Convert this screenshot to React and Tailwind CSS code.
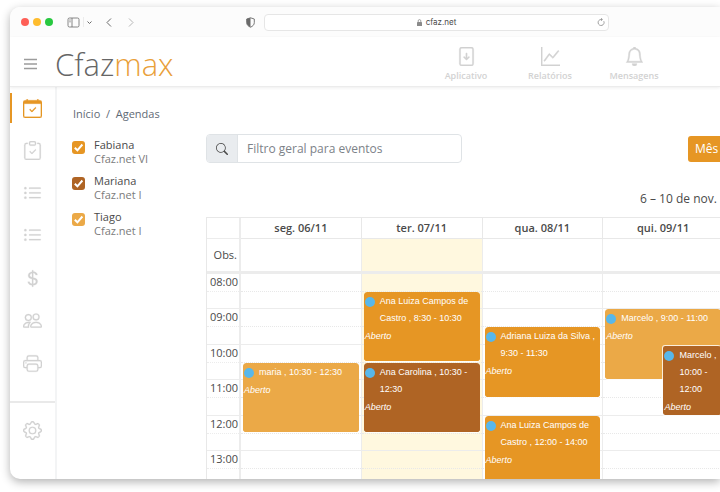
import React from "react";
import {
  BsBell,
  BsCalendarCheck,
  BsClipboardCheck,
  BsCurrencyDollar,
  BsFileArrowDown,
  BsGear,
  BsGraphUp,
  BsListUl,
  BsPeople,
  BsPrinter,
  BsSearch,
} from "react-icons/bs";

const FIRST_HOUR = 8;
const HOURS_SHOWN = 10;

const sideLinks = [
  { label: "Agendas", Icon: BsCalendarCheck, active: true },
  { label: "Tarefas", Icon: BsClipboardCheck },
  { label: "Cadastros", Icon: BsListUl },
  { label: "Listagens", Icon: BsListUl },
  { label: "Financeiro", Icon: BsCurrencyDollar },
  { label: "Pessoas", Icon: BsPeople },
  { label: "Imprimir", Icon: BsPrinter },
];

const topLinks = [
  { label: "Aplicativo", Icon: BsFileArrowDown },
  { label: "Relatórios", Icon: BsGraphUp },
  { label: "Mensagens", Icon: BsBell },
];

const people = [
  { id: "fabiana", name: "Fabiana", place: "Cfaz.net VI", color: "bg-[#e69624]" },
  { id: "mariana", name: "Mariana", place: "Cfaz.net I", color: "bg-[#af6424]" },
  { id: "tiago", name: "Tiago", place: "Cfaz.net I", color: "bg-[#eba947]" },
];

const days = [
  {
    label: "seg. 06/11",
    events: [{ title: "maria , 10:30 - 12:30", from: 10.5, to: 12.5, color: "bg-[#eba947]" }],
  },
  {
    label: "ter. 07/11",
    today: true,
    events: [
      { title: "Ana Luiza Campos de Castro , 8:30 - 10:30", from: 8.5, to: 10.5, color: "bg-[#e69624]" },
      { title: "Ana Carolina , 10:30 - 12:30", from: 10.5, to: 12.5, color: "bg-[#af6424]" },
    ],
  },
  {
    label: "qua. 08/11",
    events: [
      { title: "Adriana Luiza da Silva , 9:30 - 11:30", from: 9.5, to: 11.5, color: "bg-[#e69624]" },
      { title: "Ana Luiza Campos de Castro , 12:00 - 14:00", from: 12, to: 14, color: "bg-[#e69624]" },
    ],
  },
  {
    label: "qui. 09/11",
    events: [
      { title: "Marcelo , 9:00 - 11:00", from: 9, to: 11, color: "bg-[#eba947]" },
      { title: "Marcelo , 10:00 - 12:00", from: 10, to: 12, color: "bg-[#af6424]", half: true },
    ],
  },
];

const hours = [
  { label: "08:00", height: "h-[35px]" },
  { label: "09:00", height: "h-[36px]" },
  { label: "10:00", height: "h-[35px]" },
  { label: "11:00", height: "h-[36px]" },
  { label: "12:00", height: "h-[35px]" },
  { label: "13:00", height: "h-[36px]" },
];

function BrowserBar() {
  return (
    <div className="flex h-[30px] shrink-0 items-center bg-[#fcfcfc] pl-[11px] text-[#6a6a6a]">
      <div className="flex gap-1">
        <span className="size-2 rounded-full bg-[#fe5f57]" />
        <span className="size-2 rounded-full bg-[#febc2e]" />
        <span className="size-2 rounded-full bg-[#28c840]" />
      </div>
      <button type="button" aria-label="Barra lateral" className="ml-[14px]">
        <svg className="h-[11px] w-[13px]" viewBox="0 0 13 11" fill="none" stroke="currentColor">
          <rect x="1" y="1" width="11" height="9" rx="1.5" strokeWidth="0.8" />
          <path d="M5 1v9M2.3 3h1.4M2.3 4.8h1.4" strokeWidth="0.8" />
        </svg>
      </button>
      <span className="ml-[3px] h-[10px] w-px bg-[#ececec]" />
      <button type="button" aria-label="Grupos de abas" className="ml-[3px]">
        <svg className="size-[5px]" viewBox="0 0 5 5" fill="none" stroke="currentColor">
          <path d="M.5 1.5l2 2 2-2" />
        </svg>
      </button>
      <button type="button" aria-label="Voltar" className="ml-[14px]">
        <svg className="h-[9px] w-[6px]" viewBox="0 0 6 9" fill="none" stroke="currentColor">
          <path d="M5 .5l-4 4 4 4" />
        </svg>
      </button>
      <button type="button" aria-label="Avançar" className="ml-4 text-[#b5b5b5]">
        <svg className="h-[9px] w-[6px]" viewBox="0 0 6 9" fill="none" stroke="currentColor">
          <path d="M1 .5l4 4-4 4" />
        </svg>
      </button>
      <button type="button" aria-label="Privacidade" className="ml-[112px]">
        <svg className="h-[11px] w-[9px]" viewBox="0 0 9 11" fill="none" stroke="currentColor">
          <path d="M4.500 .8L8.300 2v3.600c0 2.200-1.600 3.700-3.800 4.600C2.300 9.300.7 7.800.7 5.600V2z" strokeWidth="0.9" />
          <path d="M4.500 .8v9.400C2.300 9.300.7 7.800.7 5.600V2z" fill="currentColor" stroke="none" />
        </svg>
      </button>
      <div className="ml-[9px] flex h-[17px] w-[345px] items-center rounded border border-[#e6e6e6] bg-white px-[3px]">
        <span className="size-2" />
        <span className="flex flex-1 items-center justify-center gap-1 font-[Inter,sans-serif] text-[8px] leading-none text-[#4a4a4a]">
          <svg className="h-[7px] w-[5px] text-[#8a8a8a]" viewBox="0 0 5 7" fill="none" stroke="currentColor">
            <rect x="0" y="3" width="5" height="4" rx="0.6" fill="currentColor" stroke="none" />
            <path d="M1.200 3V1.900a1.300 1.300 0 012.600 0V3" strokeWidth="0.8" />
          </svg>
          cfaz.net
        </span>
        <button type="button" aria-label="Recarregar" className="text-[#8a8a8a]">
          <svg className="size-2" viewBox="0 0 8 8" fill="none" stroke="currentColor" strokeWidth="0.8">
            <path d="M6.800 3.200A3 3 0 114 1.500h1.200M4 .2l1.400 1.300L4 2.800" />
          </svg>
        </button>
      </div>
    </div>
  );
}

function AppHeader() {
  return (
    <header className="z-10 flex h-[50px] shrink-0 items-center border-b border-[#ececec] bg-white pt-[5px] shadow-[0_1px_3px_rgba(0,0,0,0.07)]">
      <button type="button" aria-label="Menu" className="ml-[14px] text-[#9c9c9c]">
        <svg className="h-3 w-[13px]" viewBox="0 0 13 12" stroke="currentColor" strokeWidth="1.400">
          <path d="M0 1.500h13M0 6h13M0 10.500h13" />
        </svg>
      </button>
      <a href="#inicio" className="ml-[18px] w-[120px] text-[31px] leading-[44px] font-light text-[#666]">
        Cfaz<span className="text-[#e9a03a]">max</span>
      </a>
      <nav className="ml-[249px] flex">
        {topLinks.map(({ label, Icon }) => (
          <a key={label} href="#menu" className="flex w-[84px] flex-col items-center gap-1 text-[9px] leading-3 font-semibold text-[#d2d2d2]">
            <Icon className="size-[19px] [stroke-width:0.4]" />
            {label}
          </a>
        ))}
      </nav>
    </header>
  );
}

function Sidebar() {
  return (
    <nav className="flex w-[47px] shrink-0 flex-col border-r-2 border-[#f3f4f5] pt-[6px] text-[#d2d2d2]">
      <div className="flex h-[285px] shrink-0 flex-col justify-between">
        {sideLinks.map(({ label, Icon, active }) => (
          <a
            key={label}
            href="#secao"
            aria-label={label}
            className={
              active
                ? "flex h-[30px] items-center justify-center border-l-2 border-[#e69624] pr-[2px] text-[#e69624]"
                : "flex h-[30px] items-center justify-center"
            }
          >
            <Icon className="size-[19px] [stroke-width:0.2]" />
          </a>
        ))}
      </div>
      <div className="mt-[23px] border-t-2 border-[#e9e9e9] pt-[13px]">
        <a href="#ajustes" aria-label="Configurações" className="flex h-[28px] items-center justify-center">
          <BsGear className="size-[19px] [stroke-width:0.2]" />
        </a>
      </div>
    </nav>
  );
}

function People() {
  return (
    <aside className="w-[149px] shrink-0 pl-[15px]">
      <p className="mt-[19px] ml-px text-[11px] leading-4 whitespace-pre text-[#5f6a75]">
        <a href="#inicio">Início</a>
        {"  /  "}
        <a href="#agendas">Agendas</a>
      </p>
      <div className="mt-4 flex flex-col gap-2">
        {people.map((p) => (
          <label key={p.id} htmlFor={p.id} className="flex gap-[9px] text-[11px] leading-[14px] text-[#4a4a4a]">
            <span className="mt-[3px] grid size-[13px]">
              <input
                id={p.id}
                type="checkbox"
                defaultChecked
                className={`col-start-1 row-start-1 size-[13px] appearance-none rounded-[3px] ${p.color}`}
              />
              <svg className="pointer-events-none col-start-1 row-start-1 size-[13px]" viewBox="0 0 13 13" fill="none" stroke="white" strokeWidth="2">
                <path d="M2.800 6.800l2.600 2.500 5-5.800" />
              </svg>
            </span>
            <span>
              {p.name}
              <span className="block text-[#7b7b7b]">{p.place}</span>
            </span>
          </label>
        ))}
      </div>
    </aside>
  );
}

function Event({ event }) {
  const place = {
    top: `${((event.from - FIRST_HOUR) / HOURS_SHOWN) * 100}%`,
    height: `${((event.to - event.from) / HOURS_SHOWN) * 100}%`,
  };
  return (
    <a
      href="#evento"
      style={place}
      className={`absolute right-[3px] overflow-hidden rounded-[3px] border-b border-white/80 bg-clip-padding pt-px text-[9px] leading-[17px] text-white ${event.color} ${event.half ? "left-[49%] border-t border-l" : "left-[2px]"}`}
    >
      <span className="flex gap-[5px] pl-px font-[Liberation_Sans,Arial,sans-serif]">
        <span className="mt-1 size-[10px] shrink-0 rounded-full bg-[#58b7ea]" />
        <span>{event.title}</span>
      </span>
      <em className="mt-px block pl-px font-[Liberation_Sans,Arial,sans-serif]">Aberto</em>
    </a>
  );
}

function Calendar() {
  return (
    <div className="relative mt-[9px] w-[518px]">
      <table className="w-full table-fixed border-separate border-spacing-0 border-t border-l border-[#e8e8e8] text-[11px] text-[#4a4a4a]">
        <thead>
          <tr className="h-[21px]">
            <td className="w-[34px] border-r-2 border-b border-[#ececec] p-0" />
            {days.map((d) => (
              <th key={d.label} className="border-r border-b border-[#e8e8e8] p-0 leading-4 font-semibold">
                {d.label}
              </th>
            ))}
          </tr>
        </thead>
        <tbody>
          <tr className="h-[35px]">
            <th className="border-r-2 border-b-3 border-[#ececec] p-0 pr-[2px] text-right font-normal">Obs.</th>
            {days.map((d) => (
              <td key={d.label} className={`border-r border-b-3 border-[#ececec] p-0 ${d.today ? "bg-[#fff8df]" : ""}`} />
            ))}
          </tr>
          {hours.map((h) => (
            <tr key={h.label} className={h.height}>
              <th className="border-r-2 border-b border-[#ececec] p-0 align-top font-normal">
                <div className="h-[18px] border-b border-dotted border-[#ececec] pr-px text-right leading-4">{h.label}</div>
              </th>
              {days.map((d) => (
                <td key={d.label} className={`border-r border-b border-[#ececec] p-0 align-top ${d.today ? "bg-[#fff8df]" : ""}`}>
                  <div className="h-[18px] border-b border-dotted border-[#e8e8e8]" />
                </td>
              ))}
            </tr>
          ))}
        </tbody>
      </table>
      <div className="absolute top-[57px] right-0 left-[35px] flex h-[354px]">
        {days.map((d) => (
          <div key={d.label} className="relative flex-1">
            {d.events.map((e) => (
              <Event key={e.title} event={e} />
            ))}
          </div>
        ))}
      </div>
    </div>
  );
}

export default function App() {
  return (
    <div className="h-screen overflow-hidden bg-white pt-[7px] pb-[13px] pl-[10px] font-[Open_Sans,Noto_Sans,sans-serif]">
      <div className="flex h-full flex-col overflow-hidden rounded-l-[10px] bg-white shadow-[0_3px_10px_rgba(0,0,0,0.3)]">
        <BrowserBar />
        <AppHeader />
        <div className="flex min-h-0 flex-1">
          <Sidebar />
          <People />
          <main className="min-w-0 flex-1 overflow-hidden pt-[47px]">
            <div className="flex w-[641px] items-center">
              <div className="flex h-[29px] w-[256px] overflow-hidden rounded border border-[#dfe3e6] text-[12px]">
                <label htmlFor="filtro" aria-label="Filtro" className="flex w-[31px] items-center justify-center border-r border-[#dfe3e6] bg-[#e9ecef] text-[#4a4a4a]">
                  <BsSearch className="size-3" />
                </label>
                <input
                  id="filtro"
                  type="text"
                  placeholder="Filtro geral para eventos"
                  className="min-w-0 flex-1 px-[9px] placeholder:text-[#7c8288]"
                />
              </div>
              <button type="button" className="ml-[226px] h-[26px] rounded-l-[3px] bg-[#e69624] px-[7px] text-[12px] text-white">
                Mês
              </button>
            </div>
            <h2 className="mt-[27px] ml-[434px] text-[12px] leading-[18px] whitespace-nowrap text-[#4a4a4a]">6 – 10 de nov.</h2>
            <Calendar />
          </main>
        </div>
      </div>
    </div>
  );
}
